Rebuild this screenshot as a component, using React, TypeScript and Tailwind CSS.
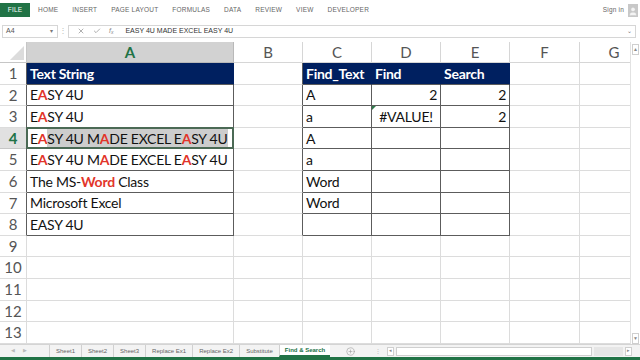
import React from 'react';
import { X, Check, CirclePlus, User } from 'lucide-react';

const FONT = { fontFamily: 'Lato, "Open Sans", sans-serif' };

const red = (s: string) => <span className="font-bold text-[#e2352a]">{s}</span>;

const TABS = ['HOME', 'INSERT', 'PAGE LAYOUT', 'FORMULAS', 'DATA', 'REVIEW', 'VIEW', 'DEVELOPER'];
const SHEETS = ['Sheet1', 'Sheet2', 'Sheet3', 'Replace Ex1', 'Replace Ex2', 'Substitute'];

type Align = 'left' | 'right' | 'center';
type CellData = { v: React.ReactNode; align?: Align };

const colA: Record<number, React.ReactNode> = {
  1: 'Text String',
  2: <>E{red('A')}SY 4U</>,
  3: <>E{red('A')}SY 4U</>,
  5: <>E{red('A')}SY 4U M{red('A')}DE EXCEL E{red('A')}SY 4U</>,
  6: <>The MS-{red('Word')} Class</>,
  7: 'Microsoft Excel',
  8: 'EASY 4U',
};

const colC: Record<number, string> = { 1: 'Find_Text', 2: 'A', 3: 'a', 4: 'A', 5: 'a', 6: 'Word', 7: 'Word' };
const colD: Record<number, CellData> = { 1: { v: 'Find' }, 2: { v: '2', align: 'right' }, 3: { v: '#VALUE!', align: 'center' } };
const colE: Record<number, CellData> = { 1: { v: 'Search' }, 2: { v: '2', align: 'right' }, 3: { v: '2', align: 'right' } };

const alignCls = (a?: Align) =>
  a === 'right' ? 'justify-end pr-[3px]' : a === 'center' ? 'justify-center' : 'justify-start pl-[3px]';

// one cell of the data area; table cells get the dark border and row 1 is the navy header
function Cell({ w, row, table, children, align, darkRight, flag }: {
  w: string; row: number; table?: boolean; children?: React.ReactNode; align?: Align; darkRight?: boolean; flag?: boolean;
}) {
  const head = table && row === 1;
  const border = head
    ? 'border-r border-b border-r-[#002060] border-b-[#5c5c5c] bg-[#002060] text-white font-bold'
    : table
      ? 'border-r border-b border-[#5c5c5c] text-[#111]'
      : darkRight
        ? 'border-r border-b border-r-[#5c5c5c] border-b-[#dcdcdc]'
        : 'border-r border-b border-[#dcdcdc]';
  return (
    <div className={`relative ${w} shrink-0 h-full flex items-center overflow-hidden whitespace-nowrap ${border} ${alignCls(align)}`}>
      {flag && <span className="absolute left-0 top-0 w-0 h-0 border-t-[4px] border-r-[4px] border-t-[#2f7a4b] border-r-transparent" />}
      {children !== undefined && <span>{children}</span>}
    </div>
  );
}

function GridRow({ r }: { r: number }) {
  const inTable = r <= 8;
  const selected = r === 4;
  return (
    <div className="flex h-[21.6px] text-[14px] tracking-[-0.25px]">
      <div className={`w-[27px] shrink-0 h-full flex items-center justify-center border-b border-r tracking-normal text-[15px] ${selected ? 'bg-[#e1e1e1] text-[#217346] font-bold border-b-[#c6c6c6] border-r-[#5c5c5c]' : inTable ? 'text-[#555] border-b-[#dcdcdc] border-r-[#5c5c5c]' : 'text-[#555] border-[#dcdcdc]'}`}>
        {r}
      </div>
      {selected ? (
        <div className="relative w-[207px] shrink-0 h-full flex items-stretch border-r border-b border-[#5c5c5c] pl-[3px] pr-[5px] whitespace-nowrap text-[#111]">
          <span className="flex items-center"><span>E{red('A')}</span></span>
          <span className="flex-1 flex items-center bg-[#cdcdcd]"><span>SY 4U M{red('A')}DE EXCEL E{red('A')}SY 4U</span></span>
          <div className="absolute -left-px -top-px right-[-1px] bottom-[-1px] border-2 border-[#4b6a55]" />
        </div>
      ) : (
        <Cell w="w-[207px]" row={r} table={inTable}>{colA[r]}</Cell>
      )}
      <Cell w="w-[69px]" row={r} darkRight={inTable} />
      <Cell w="w-[69px]" row={r} table={inTable}>{colC[r]}</Cell>
      <Cell w="w-[69px]" row={r} table={inTable} align={colD[r]?.align} flag={r === 3}>{colD[r]?.v}</Cell>
      <Cell w="w-[69px]" row={r} table={inTable} align={colE[r]?.align}>{colE[r]?.v}</Cell>
      <Cell w="w-[70px]" row={r} />
      <Cell w="w-[69px]" row={r} />
    </div>
  );
}

const App: React.FC = () => {
  const rows = Array.from({ length: 13 }, (_, i) => i + 1);
  const letters = [
    { l: 'B', w: 'w-[69px]' },
    { l: 'C', w: 'w-[69px]' },
    { l: 'D', w: 'w-[69px]' },
    { l: 'E', w: 'w-[69px]' },
    { l: 'F', w: 'w-[70px]' },
    { l: 'G', w: 'w-[69px]' },
  ];

  return (
    <div className="w-[640px] h-[360px] overflow-hidden bg-white flex flex-col" style={FONT}>
      {/* ribbon tabs */}
      <div className="h-[20px] shrink-0 flex items-center text-[6.5px] text-[#666] tracking-[0.2px]" style={{ fontFamily: '"Liberation Sans", sans-serif' }}>
        <div className="w-[30px] h-[14px] bg-[#217346] text-white flex items-center justify-center">FILE</div>
        <div className="flex items-center gap-[14px] ml-[8px]">
          {TABS.map(t => <span key={t}>{t}</span>)}
        </div>
        <div className="ml-auto flex items-center gap-[4px] mr-[2px]">
          <span>Sign in</span>
          <div className="w-[10px] h-[13px] bg-[#c8c8c8] flex items-end justify-center overflow-hidden">
            <User size={11} className="text-[#f4f4f4]" fill="#f4f4f4" strokeWidth={1} />
          </div>
        </div>
      </div>

      {/* formula bar */}
      <div className="h-[22px] shrink-0 flex items-center text-[7px] text-[#444]" style={{ fontFamily: '"Liberation Sans", sans-serif' }}>
        <div className="w-[56px] h-[13px] ml-[2px] border border-[#d6d6d6] flex items-center pl-[3px] text-[#555]">
          <span>A4</span>
          <span className="ml-auto mr-[4px] text-[6px] text-[#777]">▾</span>
        </div>
        <span className="w-[10px] text-center text-[#bbb] text-[8px]">⋮</span>
        <div className="flex-1 h-[13px] border border-[#d6d6d6] flex items-center mr-[4px]">
          <X size={8} className="ml-[8px] text-[#888]" />
          <Check size={8} className="ml-[8px] text-[#888]" />
          <span className="ml-[8px] italic text-[#888] text-[7px]">f<sub className="text-[5px]">x</sub></span>
          <span className="ml-[12px] text-[#333]">EASY 4U MADE EXCEL EASY 4U</span>
          <span className="ml-auto mr-[3px] text-[6px] text-[#777]">⌄</span>
        </div>
      </div>

      {/* sheet area */}
      <div className="flex-1 flex min-h-0">
        <div className="w-[630px] shrink-0 overflow-hidden flex flex-col">
          <div className="h-[21px] shrink-0 flex text-[15px] text-[#555]">
            <div className="w-[27px] shrink-0 h-full border-r border-b border-[#c6c6c6] relative bg-white">
              <svg className="absolute right-[2px] bottom-[2px]" width="14" height="14" viewBox="0 0 14 14">
                <polygon points="14,0 14,14 0,14" fill="#dcdcdc" />
              </svg>
            </div>
            <div className="w-[207px] shrink-0 h-full flex items-center justify-center bg-[#d2d2d2] text-[#217346] font-bold border-r border-b border-[#b9b9b9]">A</div>
            {letters.map(c => (
              <div key={c.l} className={`${c.w} shrink-0 h-full flex items-center justify-center border-r border-b border-[#d6d6d6]`}>{c.l}</div>
            ))}
          </div>
          {rows.map(r => <GridRow key={r} r={r} />)}
        </div>
        {/* vertical scrollbar */}
        <div className="w-[10px] shrink-0 flex flex-col border-l border-[#e2e2e2] bg-white pt-[2px]">
          <div className="h-[11px] mx-[1px] border border-[#cfcfcf] flex items-center justify-center text-[5px] text-[#888]">▲</div>
          <div className="flex-1" />
          <div className="h-[11px] mx-[1px] border border-[#cfcfcf] flex items-center justify-center text-[5px] text-[#888]">▼</div>
        </div>
      </div>

      {/* sheet tabs */}
      <div className="h-[13px] shrink-0 flex items-stretch bg-[#f3f3f3] border-t border-[#d4d4d4] text-[6px] text-[#666]" style={{ fontFamily: '"Liberation Sans", sans-serif' }}>
        <div className="w-[49px] flex items-center gap-[8px] pl-[11px] text-[5px] text-[#bbb]">
          <span>◀</span><span>▶</span>
        </div>
        {SHEETS.map(s => (
          <div key={s} className="flex items-center px-[6px] border-l border-[#d0d0d0]">{s}</div>
        ))}
        <div className="flex items-center px-[5px] bg-white border-l border-[#d0d0d0] border-b-2 border-b-[#217346] text-[#217346] font-bold">Find &amp; Search</div>
        <div className="flex items-center pl-[16px]">
          <CirclePlus size={9} className="text-[#999]" strokeWidth={1.5} />
        </div>
        <span className="flex items-center ml-[20px] text-[#bbb]">⋮</span>
        <div className="flex-1 flex items-center ml-[6px] mr-[8px] gap-[2px]">
          <div className="w-[7px] h-[9px] border border-[#cfcfcf] bg-white text-[5px] text-[#888] flex items-center justify-center">◂</div>
          <div className="w-[196px] h-[9px] border border-[#cfcfcf] bg-white" />
          <div className="flex-1 h-[9px] bg-[#e6e6e6]" />
          <div className="w-[7px] h-[9px] border border-[#cfcfcf] bg-white text-[5px] text-[#888] flex items-center justify-center">▸</div>
        </div>
      </div>
      <div className="h-[3px] shrink-0 bg-[#217346]" />
    </div>
  );
};

export default App;
